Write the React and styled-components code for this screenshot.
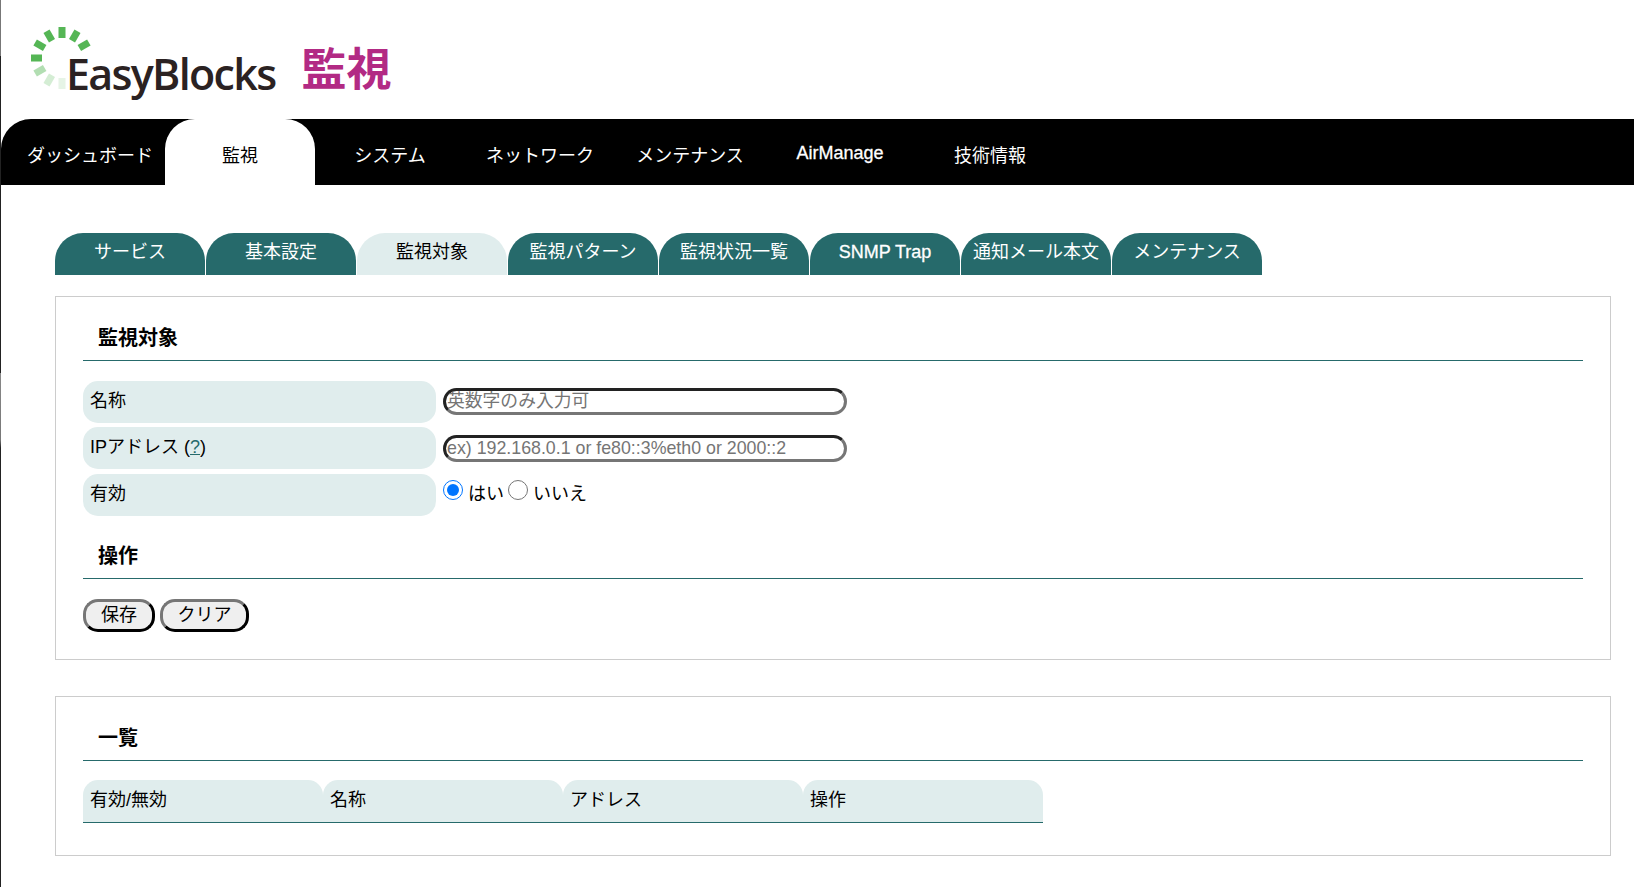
import React from 'react';
import styled, { createGlobalStyle } from 'styled-components';

const Global = createGlobalStyle`
  html, body { margin: 0; padding: 0; background: #fff; }
  body { font-family: "Liberation Sans", "Noto Sans CJK JP", sans-serif; font-size: 18px; color: #000; }
`;
const Page = styled.div`
  height: 887px; box-sizing: border-box; border-left: 1px solid #222; overflow: hidden;
  border-image: linear-gradient(to bottom, #777 0, #777 57px, #222 57px, #222 373px, #888 373px, #777 440px, #222 448px, #222 100%) 1;
`;
const Header = styled.header`
  height: 119px; display: flex; align-items: flex-start; position: relative;
`;
const LogoMark = styled.svg`
  width: 70px; height: 70px; margin: 24px 0 0 26px; flex: none;
`;
const Brand = styled.span`
  font-family: "Open Sans", sans-serif; font-weight: 600; font-size: 43px; letter-spacing: -1.7px;
  color: #2b2222; margin: 39px 0 0 -31px; line-height: 70px; height: 70px;
`;
const Section = styled.span`
  font-family: "Noto Sans CJK JP", sans-serif; font-weight: 700; font-size: 45px; line-height: 60px;
  color: #b22a84; margin: 37px 0 0 26px;
`;
const MainNav = styled.nav`
  height: 66px; background: #000; border-top-left-radius: 30px; padding-left: 14px; display: flex;
`;
const MainItem = styled.a`
  width: 150px; display: flex; justify-content: center; box-sizing: border-box;
  padding-top: ${p => (p.$latin ? 22 : 25)}px;
  -webkit-text-stroke: ${p => (p.$latin ? '0.3px' : '0')};
  line-height: 24px; height: 66px; white-space: nowrap;
  background: ${p => (p.$active ? '#fff' : 'transparent')};
  color: ${p => (p.$active ? '#000' : '#fff')};
  border-radius: ${p => (p.$active ? '30px 30px 0 0' : '0')};
`;
const Content = styled.main`
  padding: 48px 23px 0 54px;
`;
const SubTabs = styled.div`
  display: flex; gap: 1px; height: 42px; margin-bottom: 21px;
`;
const SubTab = styled.a`
  width: 150px; height: 42px; box-sizing: border-box; padding-top: 7px; line-height: 24px;
  display: flex; justify-content: center; white-space: nowrap; border-radius: 28px 28px 0 0;
  background: ${p => (p.$active ? '#e0eded' : '#266a6b')};
  color: ${p => (p.$active ? '#000' : '#fff')};
  -webkit-text-stroke: ${p => (p.$latin ? '0.3px' : '0')};
`;
const Panel = styled.section`
  border: 1px solid #ccc; padding: 27px 27px 0 27px; box-sizing: border-box;
  height: ${p => p.$h}px; margin-bottom: ${p => p.$mb || 0}px;
`;
const Heading = styled.h2`
  margin: 0; font-size: 20px; font-weight: 700; line-height: 26px; padding: 1px 0 0 15px;
  height: 37px; box-sizing: border-box; border-bottom: 1px solid #266a6b;
  font-family: "Liberation Sans", "Noto Sans CJK JP", sans-serif;
`;
const Form = styled.div`
  display: flex; flex-direction: column; gap: 4.4px; margin: 20px 0 0;
`;
const Row = styled.div`
  display: flex; height: 42px;
`;
const Label = styled.div`
  width: 353px; height: 42px; flex: none; background: #e0eded; border-radius: 15px;
  padding: 8px 7px 0; box-sizing: border-box; line-height: 24px;
`;
const Help = styled.a`
  color: #266a6b; text-decoration: underline;
`;
const Field = styled.div`
  margin-left: 7px; display: flex; padding-top: ${p => p.$top}px; line-height: 24px;
`;
const TextInput = styled.input`
  width: 404px; height: 27px; box-sizing: border-box; border: 3px solid; border-color: #222 #767676 #767676 #222;
  border-radius: 14px; padding: 0 1px; font: 400 17.8px "Liberation Sans", "Noto Sans CJK JP", sans-serif;
  background: #fff; outline: none;
  &::placeholder { color: #757575; opacity: 1; }
`;
const Radio = styled.input`
  width: 20px; height: 20px; margin: 0 5px 0 0; flex: none; accent-color: #0075ff;
`;
const RadioText = styled.label`
  margin-right: 4px; padding-top: 2px;
`;
const SubHeading = styled(Heading)`
  margin-top: 26px;
`;
const Buttons = styled.div`
  display: flex; gap: 5px; margin-top: 20px;
`;
const Btn = styled.button`
  height: 33px; width: ${p => p.$w}px; box-sizing: border-box; border: 3px solid;
  border-color: #767676 #000 #000 #767676; border-radius: 15px; background: #efefef; padding: 0;
  font: 400 18px/24px "Liberation Sans", "Noto Sans CJK JP", sans-serif; color: #000;
`;
const Table = styled.div`
  display: flex; width: 960px; margin-top: 19px; height: 43px; border-bottom: 1px solid #266a6b; box-sizing: border-box;
`;
const Th = styled.div`
  width: 240px; height: 42px; box-sizing: border-box; background: #e0eded; border-radius: 15px 15px 0 0;
  padding: 8px 7px 0; line-height: 24px;
`;

const blocks = [
  [0, 1], [30, 1], [60, 1], [-30, 1], [-60, 1], [-90, 1], [-120, 0.45], [-150, 0.25], [180, 0.15],
];

export default function App() {
  return (
    <Page>
      <Global />
      <Header>
        <LogoMark viewBox="0 0 70 70">
          {blocks.map(([a, o]) => (
            <rect key={a} x="31.5" y="3" width="7" height="11" fill="#55b655" opacity={o}
              transform={`rotate(${a} 35 34)`} />
          ))}
        </LogoMark>
        <Brand>EasyBlocks</Brand>
        <Section>監視</Section>
      </Header>
      <MainNav>
        <MainItem>ダッシュボード</MainItem>
        <MainItem $active>監視</MainItem>
        <MainItem>システム</MainItem>
        <MainItem>ネットワーク</MainItem>
        <MainItem>メンテナンス</MainItem>
        <MainItem $latin>AirManage</MainItem>
        <MainItem>技術情報</MainItem>
      </MainNav>
      <Content>
        <SubTabs>
          <SubTab>サービス</SubTab>
          <SubTab>基本設定</SubTab>
          <SubTab $active>監視対象</SubTab>
          <SubTab>監視パターン</SubTab>
          <SubTab>監視状況一覧</SubTab>
          <SubTab $latin>SNMP Trap</SubTab>
          <SubTab>通知メール本文</SubTab>
          <SubTab>メンテナンス</SubTab>
        </SubTabs>
        <Panel $h={364} $mb={36}>
          <Heading>監視対象</Heading>
          <Form>
            <Row>
              <Label>名称</Label>
              <Field $top={7}><TextInput placeholder="英数字のみ入力可" /></Field>
            </Row>
            <Row>
              <Label>IPアドレス (<Help>?</Help>)</Label>
              <Field $top={8}><TextInput placeholder="ex) 192.168.0.1 or fe80::3%eth0 or 2000::2" /></Field>
            </Row>
            <Row>
              <Label>有効</Label>
              <Field $top={6}>
                <Radio type="radio" name="on" defaultChecked />
                <RadioText>はい</RadioText>
                <Radio type="radio" name="on" />
                <RadioText>いいえ</RadioText>
              </Field>
            </Row>
          </Form>
          <SubHeading>操作</SubHeading>
          <Buttons>
            <Btn $w={72}>保存</Btn>
            <Btn $w={89}>クリア</Btn>
          </Buttons>
        </Panel>
        <Panel $h={160}>
          <Heading>一覧</Heading>
          <Table>
            <Th>有効/無効</Th>
            <Th>名称</Th>
            <Th>アドレス</Th>
            <Th>操作</Th>
          </Table>
        </Panel>
      </Content>
    </Page>
  );
}
